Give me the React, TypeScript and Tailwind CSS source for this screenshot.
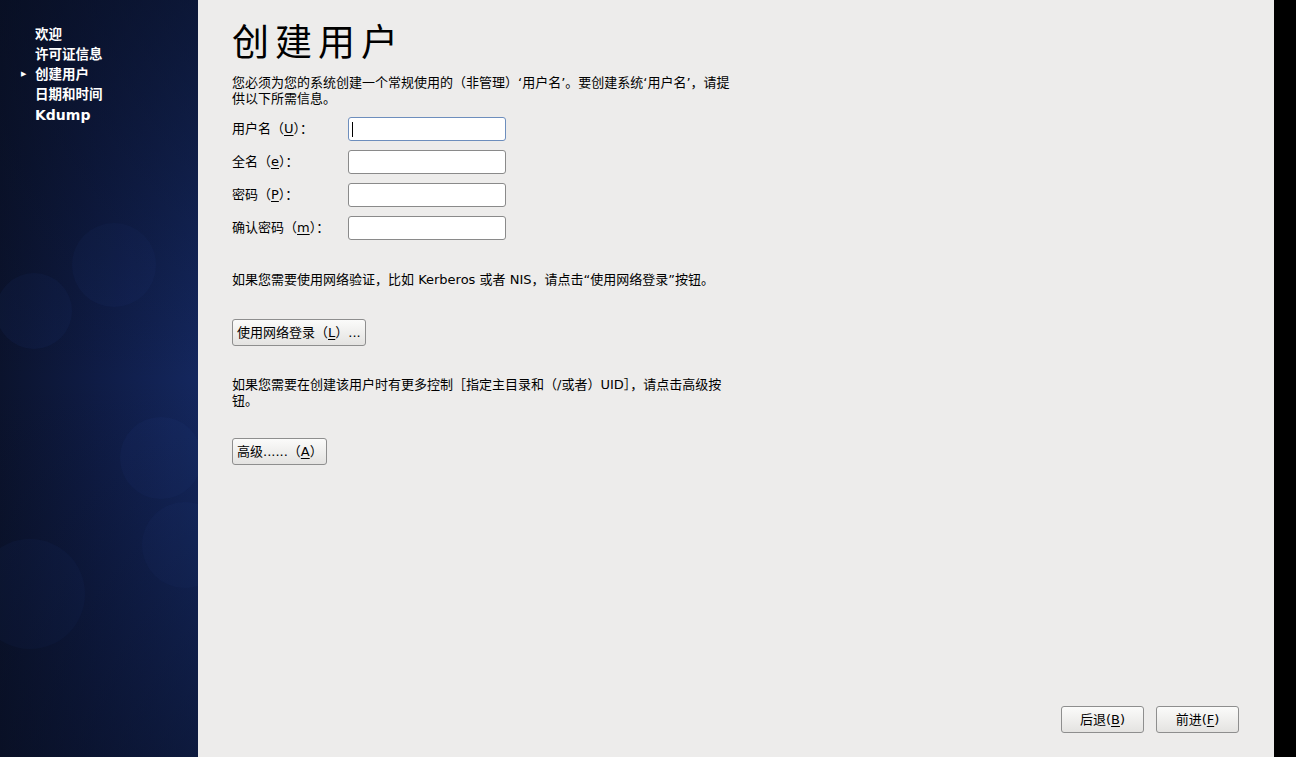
import type { ReactNode } from 'react'

const font = { fontFamily: '"DejaVu Sans", "Noto Sans CJK SC", sans-serif' }

const steps = ['欢迎', '许可证信息', '创建用户', '日期和时间', 'Kdump']

const bubbles = [
  'left-[72px] top-[223px] h-[84px] w-[84px]',
  'left-[-4px] top-[273px] h-[76px] w-[76px]',
  'left-[120px] top-[417px] h-[82px] w-[82px]',
  'left-[142px] top-[502px] h-[86px] w-[86px]',
  'left-[-25px] top-[539px] h-[110px] w-[110px]'
]

function Key ({ k }: { k: string }): JSX.Element {
  return <span className="underline underline-offset-2">{k}</span>
}

function GtkButton ({ children, className = '' }: { children: ReactNode, className?: string }): JSX.Element {
  return (
    <button className={`h-[27px] whitespace-nowrap rounded-[3px] border border-[#8e8e8e] bg-gradient-to-b from-[#fbfbfa] to-[#e4e3e1] text-[13px] leading-none text-black ${className}`}>
      {children}
    </button>
  )
}

function Field ({ label, focused = false }: { label: ReactNode, focused?: boolean }): JSX.Element {
  return (
    <div className="flex h-[24px] items-center">
      <span className="w-[116px] whitespace-nowrap text-[13px]">{label}</span>
      <div className={`flex h-[24px] w-[158px] items-center rounded-[3px] border bg-white px-[3px] ${focused ? 'border-[#6d8ebd]' : 'border-[#8a8a8a]'}`}>
        {focused && <span className="h-[15px] w-px bg-black" />}
      </div>
    </div>
  )
}

export default function App (): JSX.Element {
  return (
    <div className="flex h-[757px] w-[1296px] overflow-hidden bg-[#edeceb] text-black" style={font}>
      <aside className="relative h-full w-[198px] shrink-0 overflow-hidden bg-gradient-to-r from-[#0b132d] via-[#0f1c46] to-[#14275e]">
        {bubbles.map((b) => (
          <div key={b} className={`absolute rounded-full bg-[#2a4290]/10 ${b}`} />
        ))}
        <div className="absolute inset-0 bg-gradient-to-b from-[#070d1e]/60 via-transparent to-[#070d1e]/50" />
        <ul className="relative flex flex-col pt-[24px] text-[13.5px] font-bold leading-[20px] text-white">
          {steps.map((s, i) => (
            <li key={s} className={`flex items-center ${s === 'Kdump' ? 'mt-px text-[14px]' : ''}`}>
              <span className="w-[35px] pl-[21px] text-[7px]">{i === 2 ? '▶' : ''}</span>
              <span>{s}</span>
            </li>
          ))}
        </ul>
      </aside>

      <main className="flex h-full w-[1076px] flex-col pl-[34px] pr-[35px]">
        <h1 className="mt-[18px] text-[37px] leading-[52px] tracking-[6px]">创建用户</h1>
        <p className="mt-[5px] whitespace-nowrap text-[13px] leading-[16px]">
          您必须为您的系统创建一个常规使用的（非管理）‘用户名’。要创建系统‘用户名’，请提<br />供以下所需信息。
        </p>

        <div className="mt-[10px] flex flex-col gap-[9px]">
          <Field focused label={<>用户名（<Key k="U" />）：</>} />
          <Field label={<>全名（<Key k="e" />）：</>} />
          <Field label={<>密码（<Key k="P" />）：</>} />
          <Field label={<>确认密码（<Key k="m" />）：</>} />
        </div>

        <p className="mt-[32px] whitespace-nowrap text-[13px] leading-[16px]">
          如果您需要使用网络验证，比如 Kerberos 或者 NIS，请点击“使用网络登录”按钮。
        </p>
        <div className="mt-[31px]">
          <GtkButton className="w-[134px] px-[4px] text-left">使用网络登录（<Key k="L" />）...</GtkButton>
        </div>

        <p className="mt-[31px] whitespace-nowrap text-[13px] leading-[16px]">
          如果您需要在创建该用户时有更多控制［指定主目录和（/或者）UID］，请点击高级按<br />钮。
        </p>
        <div className="mt-[29px]">
          <GtkButton className="w-[95px] px-[4px] text-left">高级......（<Key k="A" />）</GtkButton>
        </div>

        <div className="mt-auto mb-[24px] flex justify-end gap-[12px]">
          <GtkButton className="w-[83px]">后退(<Key k="B" />)</GtkButton>
          <GtkButton className="w-[83px]">前进(<Key k="F" />)</GtkButton>
        </div>
      </main>

      <div className="h-full flex-1 bg-black" />
    </div>
  )
}
